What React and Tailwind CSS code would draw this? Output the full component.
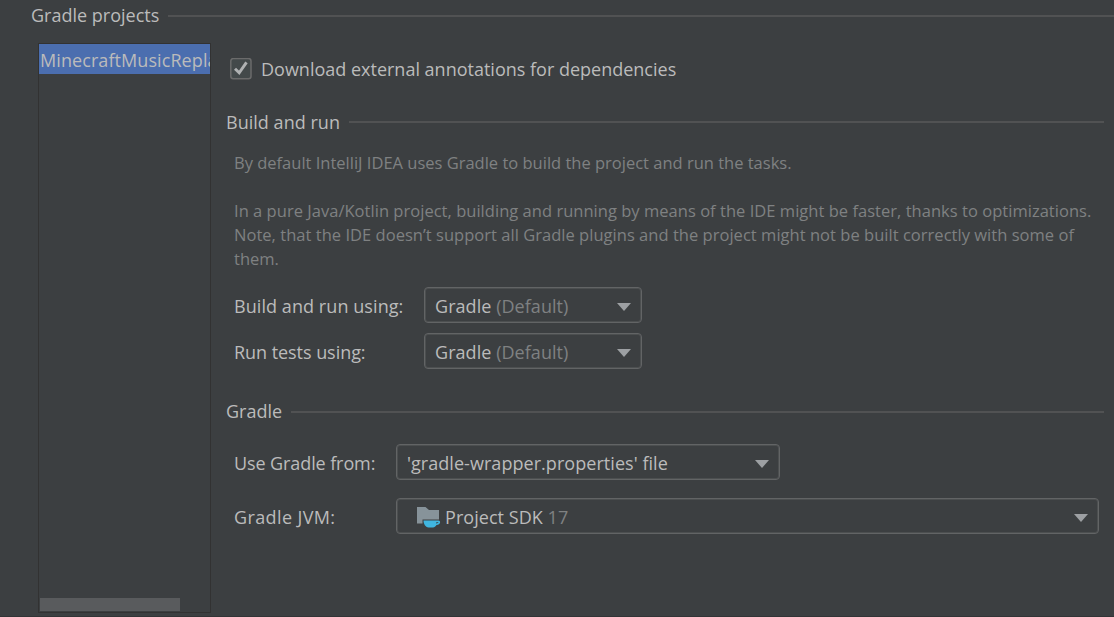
function SectionTitle({ children, className }) {
  return (
    <div className={`flex h-6 items-center ${className}`}>
      <h2 className="shrink-0 whitespace-nowrap">{children}</h2>
      <div className="h-[2px] flex-1 bg-[#515253]" />
    </div>
  );
}

function Combo({ children, className }) {
  return (
    <button
      type="button"
      className={`flex h-9 items-center justify-between rounded-[4px] border border-[#626465] pr-[10px] text-left shadow-[inset_0_0_0_1px_#4c4f50] ${className}`}
    >
      <span className="flex items-center whitespace-pre pt-[2px]">{children}</span>
      <svg width="14" height="8" viewBox="0 0 14 8" className="mt-[3px]">
        <path d="M0 0H14L7 8Z" fill="#9da0a3" />
      </svg>
    </button>
  );
}

function SdkIcon() {
  return (
    <svg width="24" height="22" viewBox="0 0 24 22" className="mr-[4px]">
      <path d="M0 1H8.500L12 4H22V13.500H5.500V17.500H0Z" fill="#87939a" />
      <path d="M6.500 14.500H21.500C24 14.500 23.800 18.800 19.500 19C18.500 20.500 17.500 21.500 16 21.500H11.500C8.500 21 6.500 18 6.500 14.500Z" fill="#40b6e0" />
      <path d="M19.300 16.200H21.600Q21.500 17.300 19 17.500Z" fill="#3c3f41" />
    </svg>
  );
}

export default function App() {
  return (
    <main className="flex h-[617px] w-[1114px] flex-col overflow-hidden border-b border-[#323436] bg-[#3c3f41] font-['Open_Sans',sans-serif] text-[18px] leading-6 text-[#bbbbbb]">
      <SectionTitle className="mt-1 pl-[31px]">
        <span className="mr-[9px] inline-block w-[128px] pb-[2px]">Gradle projects</span>
      </SectionTitle>
      <div className="flex pl-[38px]">
        <aside className="mt-[15px] flex h-[570px] w-[173px] shrink-0 flex-col justify-between border border-[#323232] pb-[1px]">
          <div className="h-[30px] overflow-hidden whitespace-nowrap bg-[#4b6eaf] pl-[1px] leading-[32px] tracking-[0.08px]">
            MinecraftMusicReplacer
          </div>
          <div className="ml-[1px] h-[13px] w-[140px] bg-[#595b5d]" />
        </aside>
        <section className="flex min-w-0 flex-1 flex-col pl-[15px]">
          <label className="mt-[29px] flex h-6 items-center pl-1">
            <svg width="22" height="22" viewBox="0 0 22 22" className="mr-[9px]">
              <rect x=".8" y=".5" width="20.200" height="20.200" rx="2.500" fill="#43494a" stroke="#6b6b6b" strokeWidth="1.500" />
              <path d="M5 10.800L9.200 14.800L16.500 4.300" fill="none" stroke="#b0b2b3" strokeWidth="2.900" />
            </svg>
            <span className="whitespace-nowrap">Download external annotations for dependencies</span>
          </label>
          <SectionTitle className="mr-[10px] mt-[29px]">
            <span className="mr-[9px] inline-block w-[114px] tracking-[0.03px]">Build and run</span>
          </SectionTitle>
          <div className="mt-[17px] flex flex-col whitespace-nowrap pl-2 text-[16.5px] leading-6 text-[#7f8182]">
            <p>By default IntelliJ IDEA uses Gradle to build the project and run the tasks.</p>
            <p className="mt-6 tracking-[0.03px]">In a pure Java/Kotlin project, building and running by means of the IDE might be faster, thanks to optimizations.</p>
            <p className="tracking-[0.03px]">Note, that the IDE doesn’t support all Gradle plugins and the project might not be built correctly with some of</p>
            <p>them.</p>
          </div>
          <div className="mt-4 flex items-center pl-2">
            <span className="w-[190px] pt-[2px] tracking-[0.07px]">Build and run using:</span>
            <Combo className="w-[218px] pl-[10px]">
              <span className="tracking-[0.05px]">Gradle <span className="text-[#7f8182]">(Default)</span></span>
            </Combo>
          </div>
          <div className="mt-[10px] flex items-center pl-2">
            <span className="w-[190px] pt-[2px] tracking-[-0.05px]">Run tests using:</span>
            <Combo className="w-[218px] pl-[10px]">
              <span className="tracking-[0.05px]">Gradle <span className="text-[#7f8182]">(Default)</span></span>
            </Combo>
          </div>
          <SectionTitle className="mr-[10px] mt-[31px]">
            <span className="mr-[9px] inline-block w-[56px] pb-[2px]">Gradle</span>
          </SectionTitle>
          <div className="mt-5 flex items-center pl-2">
            <span className="w-[162px] pt-[2px] tracking-[-0.1px]">Use Gradle from:</span>
            <Combo className="w-[384px] pl-[10px]">
              <span className="tracking-[0.05px]">'gradle-wrapper.properties' file</span>
            </Combo>
          </div>
          <div className="mt-[18px] flex items-center pl-2">
            <span className="w-[162px] pt-[2px] tracking-[0.38px]">Gradle JVM:</span>
            <Combo className="w-[703px] pl-[20px]">
              <SdkIcon />
              <span className="tracking-[0.05px]">Project SDK <span className="text-[#7f8182]">17</span></span>
            </Combo>
          </div>
        </section>
      </div>
    </main>
  );
}
